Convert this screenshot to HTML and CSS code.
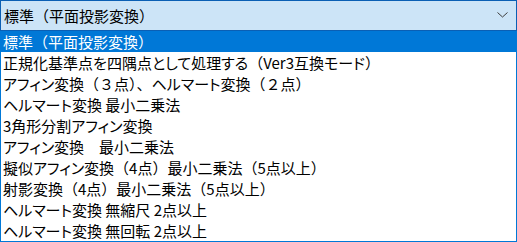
FILE: index.html
```html
<!DOCTYPE html>
<html lang="ja">
<head>
<meta charset="UTF-8">
<link rel="stylesheet" href="styles.css">
<title>combo</title>
</head>
<body>

<div class="combo">
<span class="comboText">標準（平面投影変換）</span>
<svg class="chevron" width="11" height="6" viewBox="0 0 11 6"><path d="M0.5 0.5 L5.5 5 L10.5 0.5" fill="none" stroke="#3c3c3c" stroke-width="1"/></svg>
</div>

<!-- kana runs get proportional widths, like the UI font -->
<ul class="list">
<li class="item selected">標準（平面投影変換）</li>
<li class="item">正規化基準点<span class="kana">を</span>四隅点<span class="kana">として</span>処理<span class="kana">する</span>（Ver3互換<span class="kana">モード</span>）</li>
<li class="item"><span class="kana">アフィン</span>変換（３点）、<span class="kana">ヘルマート</span>変換（２点）</li>
<li class="item"><span class="kana">ヘルマート</span>変換 最小二乗法</li>
<li class="item">3角形分割<span class="kana">アフィン</span>変換</li>
<li class="item"><span class="kana">アフィン</span>変換　最小二乗法</li>
<li class="item">擬似<span class="kana">アフィン</span>変換（4点）最小二乗法（5点以上）</li>
<li class="item">射影変換（4点）最小二乗法（5点以上）</li>
<li class="item"><span class="kana">ヘルマート</span>変換 無縮尺 2点以上</li>
<li class="item"><span class="kana">ヘルマート</span>変換 無回転 2点以上</li>
</ul>

</body>
</html>
```

FILE: styles.css
```css
*,*:before,*:after{
margin:0;
padding:0;
box-sizing:border-box;
}

:root{
--comboBg:#cce4f7;
--comboBorder:#0a5fb4;
--listBorder:#0078d7;
--selected:#0078d7;
}

body{
width:517px;
height:242px;
background:#fff;
font-family:"Noto Sans CJK JP","Noto Sans",sans-serif;
font-size:15px;
color:#000;
}

ul{
list-style:none;
}

.combo{
height:31px;
display:flex;
align-items:center;
justify-content:space-between;
padding:0 8px 0 3px;
background:var(--comboBg);
border:1px solid var(--comboBorder);
}

.comboText{
line-height:19px;
}

.chevron{
display:block;
margin-top:-1px;
}

.list{
border:1px solid var(--listBorder);
border-top:none;
}

.item{
height:21px;
line-height:21px;
padding-left:2px;
white-space:nowrap;
}

.kana{
font-feature-settings:"palt";
}

.selected{
background:var(--selected);
color:#fff;
}
```
